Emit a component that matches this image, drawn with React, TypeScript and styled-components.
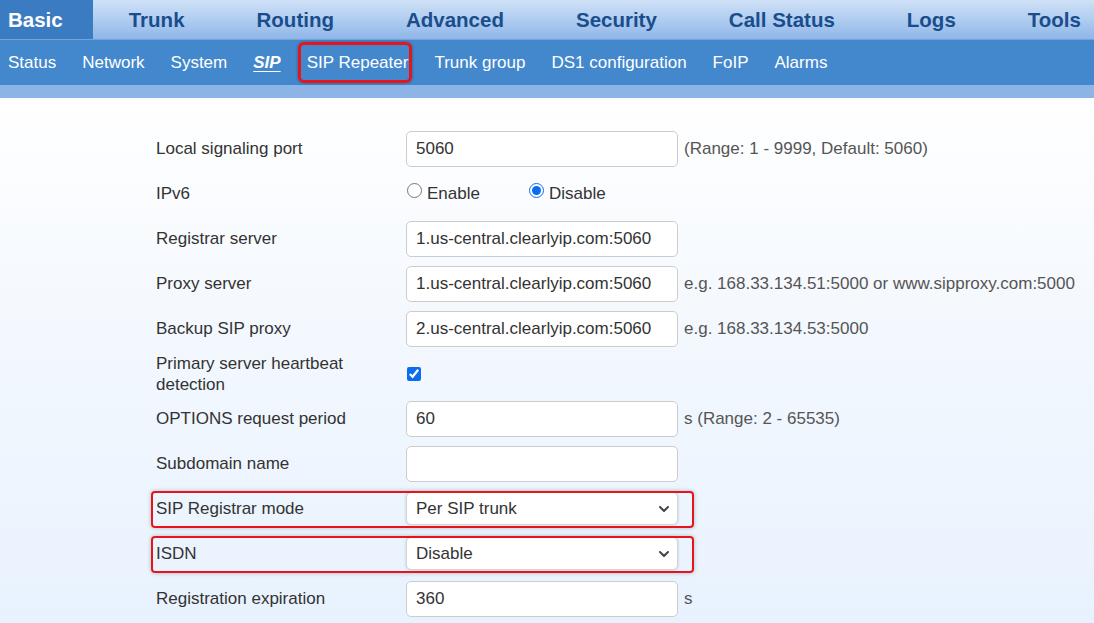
import { createGlobalStyle, styled } from 'styled-components';
import { ChevronDown } from 'lucide-react';

const GlobalStyle = createGlobalStyle`
	html, body {
		margin: 0;
		padding: 0;
	}
	body {
		font-family: 'Liberation Sans', Arial, sans-serif;
		background: #ffffff;
	}
	* {
		box-sizing: border-box;
	}
`;

const topTabs = ['Basic', 'Trunk', 'Routing', 'Advanced', 'Security', 'Call Status', 'Logs', 'Tools'];
const subTabs = ['Status', 'Network', 'System', 'SIP', 'SIP Repeater', 'Trunk group', 'DS1 configuration', 'FoIP', 'Alarms'];

type Field =
	| { kind: 'input'; label: string; value: string; hint?: string; marked?: boolean }
	| { kind: 'radio'; label: string }
	| { kind: 'check'; label: string }
	| { kind: 'select'; label: string; value: string; marked?: boolean };

const fields: Field[] = [
	{ kind: 'input', label: 'Local signaling port', value: '5060', hint: '(Range: 1 - 9999, Default: 5060)' },
	{ kind: 'radio', label: 'IPv6' },
	{ kind: 'input', label: 'Registrar server', value: '1.us-central.clearlyip.com:5060' },
	{ kind: 'input', label: 'Proxy server', value: '1.us-central.clearlyip.com:5060', hint: 'e.g. 168.33.134.51:5000 or www.sipproxy.com:5000' },
	{ kind: 'input', label: 'Backup SIP proxy', value: '2.us-central.clearlyip.com:5060', hint: 'e.g. 168.33.134.53:5000' },
	{ kind: 'check', label: 'Primary server heartbeat detection' },
	{ kind: 'input', label: 'OPTIONS request period', value: '60', hint: 's (Range: 2 - 65535)' },
	{ kind: 'input', label: 'Subdomain name', value: '' },
	{ kind: 'select', label: 'SIP Registrar mode', value: 'Per SIP trunk', marked: true },
	{ kind: 'select', label: 'ISDN', value: 'Disable', marked: true },
	{ kind: 'input', label: 'Registration expiration', value: '360', hint: 's' },
];

const App = () => {
	const renderControl = (field: Field) => {
		if (field.kind === 'input') {
			return <TextInput type="text" defaultValue={field.value} />;
		}
		if (field.kind === 'radio') {
			return (
				<RadioGroup>
					<RadioLabel $width={122}>
						<input type="radio" name="ipv6" />
						Enable
					</RadioLabel>
					<RadioLabel>
						<input type="radio" name="ipv6" defaultChecked />
						Disable
					</RadioLabel>
				</RadioGroup>
			);
		}
		if (field.kind === 'check') {
			return <CheckBox type="checkbox" defaultChecked />;
		}
		return (
			<SelectWrap>
				<Select defaultValue={field.value}>
					<option>{field.value}</option>
				</Select>
				<ChevronDown size={16} strokeWidth={3} />
			</SelectWrap>
		);
	};

	return (
		<>
			<GlobalStyle />
			<Page>
				<TopBar>
					{topTabs.map((tab) => (
						<TopTab key={tab} $active={tab === 'Basic'}>
							{tab}
						</TopTab>
					))}
				</TopBar>
				<SubBar>
					{subTabs.map((tab) => (
						<SubTab key={tab} $current={tab === 'SIP'} $marked={tab === 'SIP Repeater'}>
							{tab}
						</SubTab>
					))}
				</SubBar>
				<Band />
				<Content>
					<Form>
						{fields.map((field) => (
							<Row key={field.label} $marked={'marked' in field && !!field.marked}>
								<Label>{field.label}</Label>
								<div>{renderControl(field)}</div>
								<Hint>{'hint' in field ? field.hint : ''}</Hint>
							</Row>
						))}
					</Form>
				</Content>
			</Page>
		</>
	);
};

export default App;

const Page = styled.div`
	width: 100%;
	min-height: 623px;
	display: flex;
	flex-direction: column;
	overflow: hidden;
`;

const TopBar = styled.div`
	display: flex;
	height: 40px;
	background: linear-gradient(#cfe1f7 0%, #b3cff1 45%, #8fb6e8 100%);
	border-bottom: 1px solid #78a3da;
	white-space: nowrap;
`;

const TopTab = styled.div<{ $active?: boolean }>`
	flex: none;
	height: 39px;
	line-height: 40px;
	padding: ${(p) => (p.$active ? '0 30px 0 8px' : '0 36px')};
	font-size: 20.5px;
	font-weight: bold;
	color: ${(p) => (p.$active ? '#ffffff' : '#1a4d8c')};
	background: ${(p) => (p.$active ? '#3b7bc1' : 'transparent')};
`;

const SubBar = styled.div`
	display: flex;
	align-items: center;
	height: 45px;
	padding-left: 8px;
	gap: 26px;
	background: #4387cd;
	white-space: nowrap;
`;

const SubTab = styled.div<{ $current?: boolean; $marked?: boolean }>`
	position: relative;
	font-size: 17px;
	color: #ffffff;
	font-weight: ${(p) => (p.$current ? 'bold' : 'normal')};
	font-style: ${(p) => (p.$current ? 'italic' : 'normal')};
	text-decoration: ${(p) => (p.$current ? 'underline' : 'none')};
	text-underline-offset: 3px;

	${(p) =>
		p.$marked &&
		`
		&::after {
			content: '';
			position: absolute;
			left: -9px;
			right: -4px;
			top: -11px;
			bottom: -10px;
			border: 3px solid #e8141c;
			border-radius: 6px;
			box-shadow: 0 0 3px rgba(0, 0, 0, 0.35);
		}
	`}
`;

const Band = styled.div`
	height: 13px;
	background: #8cb4e7;
`;

const Content = styled.div`
	flex: 1;
	background: linear-gradient(#ffffff 0%, #f3f8fe 45%, #e8f2fe 100%);
`;

const Form = styled.div`
	padding: 28px 0 0 156px;
	display: flex;
	flex-direction: column;
`;

const Row = styled.div<{ $marked?: boolean }>`
	position: relative;
	display: grid;
	grid-template-columns: 250px 272px auto;
	align-items: center;
	height: 45px;
	font-size: 17px;
	color: #333333;

	${(p) =>
		p.$marked &&
		`
		&::after {
			content: '';
			position: absolute;
			left: -5px;
			width: 539px;
			top: 5px;
			bottom: 3px;
			border: 2px solid #e8141c;
			border-radius: 4px;
			box-shadow: 0 0 4px rgba(0, 0, 0, 0.25);
			pointer-events: none;
		}
	`}
`;

const Label = styled.div`
	line-height: 21px;
	padding-right: 40px;
`;

const TextInput = styled.input`
	width: 272px;
	height: 36px;
	padding: 0 9px;
	border: 1px solid #cccccc;
	border-radius: 5px;
	background: #ffffff;
	font-family: 'Liberation Sans', Arial, sans-serif;
	font-size: 17px;
	color: #333333;
	outline: none;
`;

const RadioGroup = styled.div`
	display: flex;
	align-items: center;
`;

const RadioLabel = styled.label<{ $width?: number }>`
	display: flex;
	align-items: center;
	gap: 5px;
	width: ${(p) => (p.$width ? `${p.$width}px` : 'auto')};

	input {
		margin: -6px 0 0 1px;
		width: 15px;
		height: 15px;
		accent-color: #0b6cf0;
	}
`;

const CheckBox = styled.input`
	display: block;
	margin: 0 0 0 1px;
	width: 14px;
	height: 14px;
	accent-color: #0b6cf0;
`;

const SelectWrap = styled.div`
	position: relative;
	width: 272px;

	svg {
		position: absolute;
		right: 6px;
		top: 9px;
		color: #444444;
		pointer-events: none;
	}
`;

const Select = styled.select`
	appearance: none;
	width: 272px;
	height: 33px;
	padding: 0 9px;
	border: 1px solid #d4d4d4;
	border-radius: 5px;
	background: #ffffff;
	box-shadow: 0 0 3px rgba(0, 0, 0, 0.18);
	font-family: 'Liberation Sans', Arial, sans-serif;
	font-size: 17px;
	color: #333333;
	outline: none;
`;

const Hint = styled.div`
	padding-left: 6px;
	color: #555555;
	white-space: nowrap;
`;
